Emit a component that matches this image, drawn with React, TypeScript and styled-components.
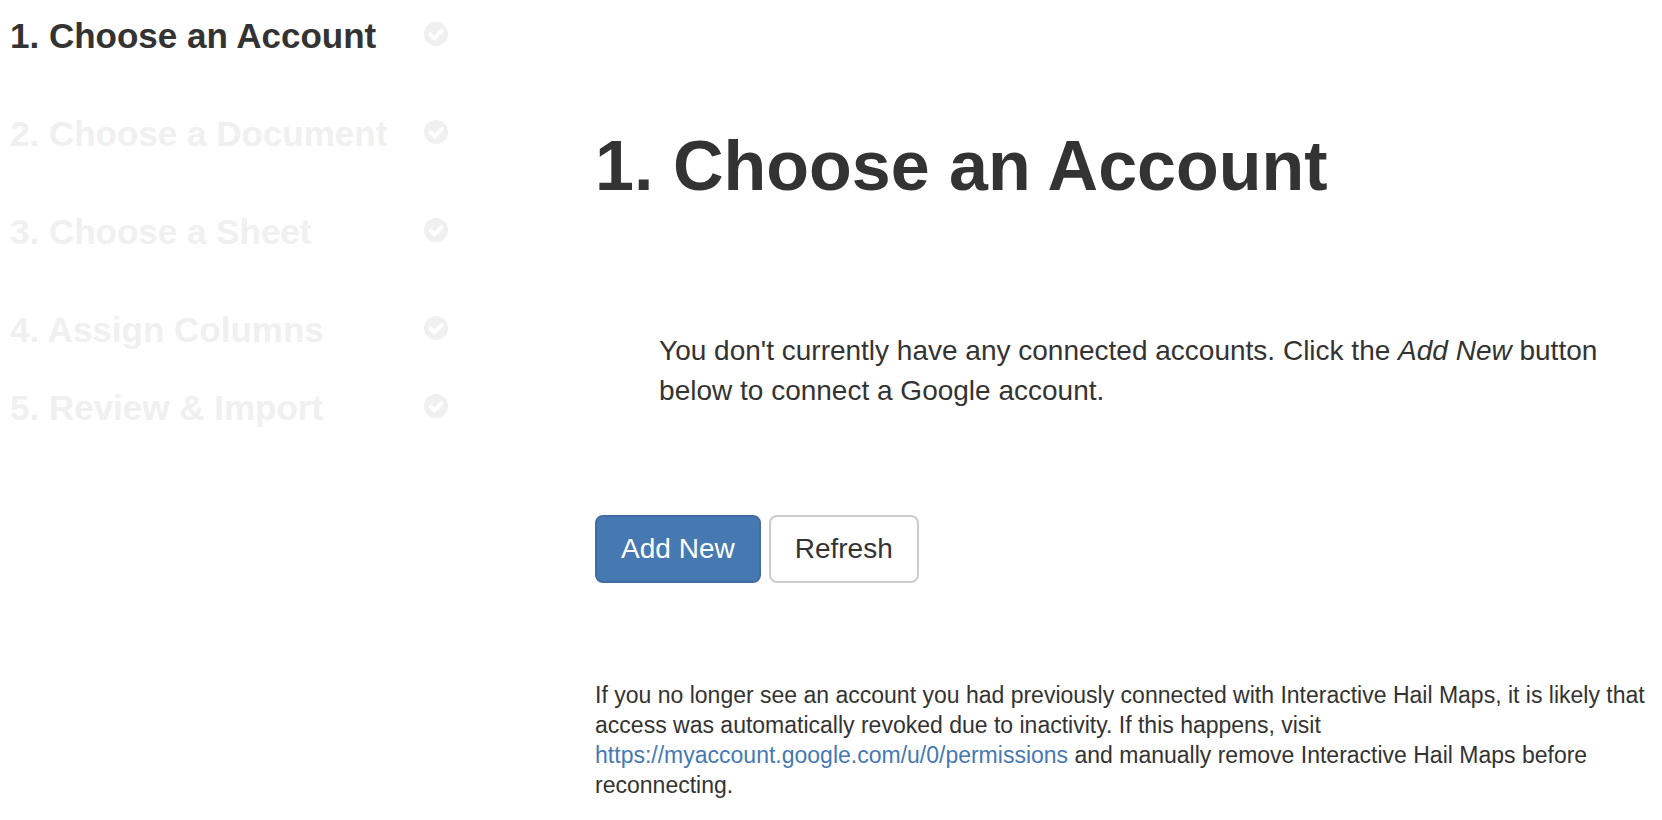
import React from "react";
import styled, { createGlobalStyle } from "styled-components";

const GlobalStyle = createGlobalStyle`
  *, *::before, *::after { box-sizing: border-box; }
  body {
    margin: 0;
    background: #fff;
    color: #333;
    font-family: "Liberation Sans", "Helvetica Neue", Helvetica, Arial, sans-serif;
    font-size: 28px;
    line-height: 40px;
  }
`;

const Page = styled.div`
  display: grid;
  grid-template-columns: 34% minmax(0, 1fr);
`;

const Sidebar = styled.nav`
  padding: 16px 10px 0;
`;

const StepList = styled.ol`
  list-style: none;
  margin: 0;
  padding: 0;
  max-width: 438px;
`;

const Step = styled.li<{ $active?: boolean }>`
  display: flex;
  align-items: flex-start;
  justify-content: space-between;
  margin-bottom: 58px;
  color: ${(p) => (p.$active ? "#333" : "#f0f0f0")};
  font-size: 35px;
  font-weight: 700;
  line-height: 40px;
  white-space: nowrap;

  &:nth-last-child(2) { margin-bottom: 38px; }
  &:last-child { margin-bottom: 0; }
`;

const CheckIcon = styled.svg`
  flex: none;
  width: 24px;
  height: 24px;
  margin-top: 6px;
`;

const Main = styled.main`
  padding: 126px 10px 0 30px;
`;

const Title = styled.h1`
  margin: 0;
  font-size: 70px;
  font-weight: 700;
  line-height: 80px;
`;

const Message = styled.p`
  margin: 125px 0 0;
  padding: 0 34px 0 64px;
`;

const Actions = styled.div`
  display: flex;
  gap: 8px;
  margin-top: 104px;
`;

const Button = styled.button<{ $primary?: boolean }>`
  padding: 12px 24px;
  border: 2px solid ${(p) => (p.$primary ? "#3f6da1" : "#ccc")};
  border-radius: 8px;
  background: ${(p) => (p.$primary ? "#4679b2" : "#fff")};
  color: ${(p) => (p.$primary ? "#fff" : "#333")};
  font: inherit;
  cursor: pointer;
`;

const Note = styled.p`
  margin: 97px 0 0;
  font-size: 23px;
  line-height: 30px;
`;

const Link = styled.a`
  color: #4679b2;
  text-decoration: none;
`;

const steps = [
  "1. Choose an Account",
  "2. Choose a Document",
  "3. Choose a Sheet",
  "4. Assign Columns",
  "5. Review & Import",
];

export default function App() {
  return (
    <>
      <GlobalStyle />
      <Page>
        <Sidebar aria-label="Import steps">
          <StepList>
            {steps.map((label, i) => (
              <Step key={label} $active={i === 0} aria-current={i === 0 ? "step" : undefined}>
                {label}
                <CheckIcon viewBox="0 0 24 24" aria-hidden="true">
                  <circle cx="12" cy="12" r="12" fill="#f0f0f0" />
                  <path
                    d="M5.5 11.5 10.5 16.4 18.8 7.9"
                    fill="none"
                    stroke="#fff"
                    strokeWidth="4"
                  />
                </CheckIcon>
              </Step>
            ))}
          </StepList>
        </Sidebar>
        <Main>
          <Title>1. Choose an Account</Title>
          <Message>
            You don't currently have any connected accounts. Click the <em>Add New</em> button
            below to connect a Google account.
          </Message>
          <Actions>
            <Button type="button" $primary>Add New</Button>
            <Button type="button">Refresh</Button>
          </Actions>
          <Note>
            If you no longer see an account you had previously connected with Interactive Hail
            Maps, it is likely that access was automatically revoked due to inactivity. If this
            happens, visit{" "}
            <Link href="https://myaccount.google.com/u/0/permissions">
              https://myaccount.google.com/u/0/permissions
            </Link>{" "}
            and manually remove Interactive Hail Maps before reconnecting.
          </Note>
        </Main>
      </Page>
    </>
  );
}
